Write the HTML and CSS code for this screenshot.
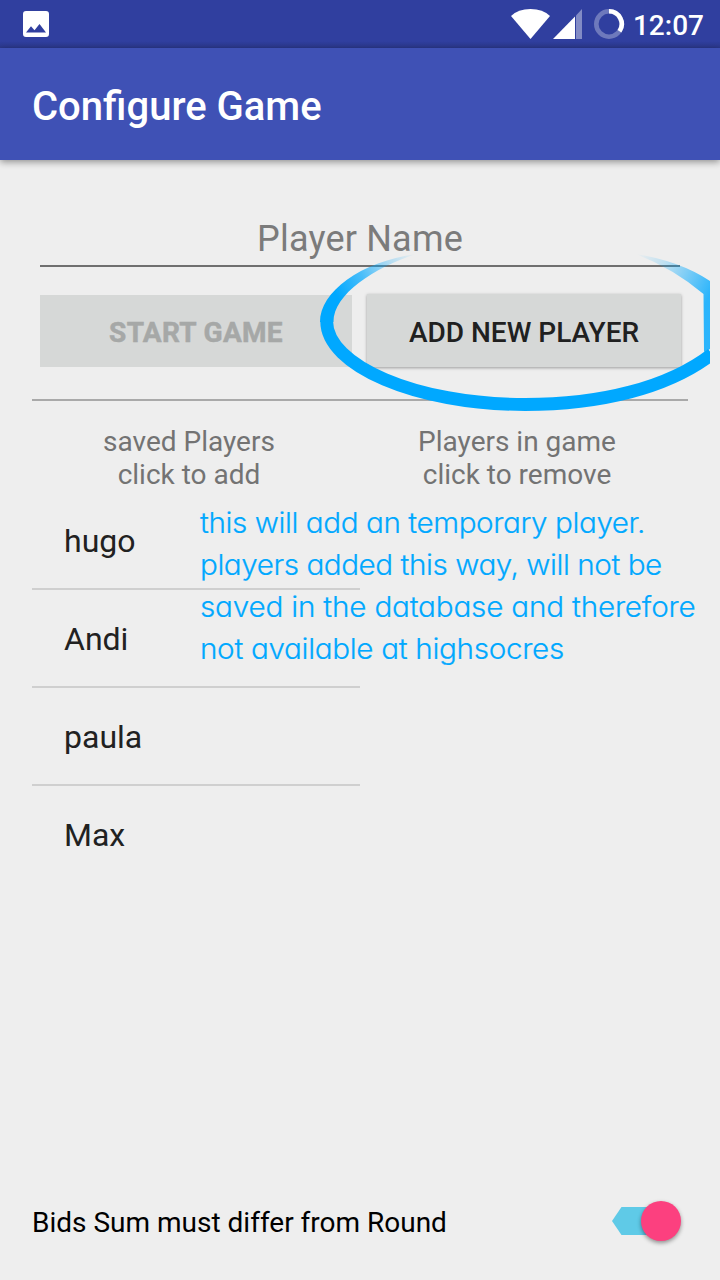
FILE: index.html
```html
<!DOCTYPE html>
<html lang="en">
<head>
<meta charset="utf-8">
<title>Configure Game</title>
<link rel="stylesheet" href="styles.css">
</head>
<body>
<div class="screen">
  <header class="status">
    <svg class="status-image" width="26" height="26" viewBox="0 0 26 26"><path fill="#fff" fill-rule="evenodd" d="M3 0H23Q26 0 26 3V23Q26 26 23 26H3Q0 26 0 23V3Q0 0 3 0ZM3 21.500H23L16.500 13L11.500 19.300L8 15.200Z"/></svg>
    <svg class="status-icons" width="116" height="34" viewBox="0 0 116 34">
      <path fill="#fff" d="M1 11Q8 4 20.500 4T40 11L20.500 34Z"/>
      <path fill="#fff" d="M43 34L65 11.500V34Z"/>
      <path fill="#fff" opacity=".4" d="M66 10.500L72 4V34H66Z"/>
      <circle cx="99" cy="19" r="12.700" fill="none" stroke="#fff" stroke-opacity=".3" stroke-width="4.600"/>
      <path d="M99 6.300A12.700 12.700 0 0 1 109.500 26.200" fill="none" stroke="#fff" stroke-width="4.600"/>
    </svg>
    <span class="clock">12:07</span>
  </header>
  <div class="appbar"><h1>Configure Game</h1></div>
  <main class="content">
    <div class="name-field">Player Name</div>
    <div class="buttons">
      <button class="btn btn-start" disabled>START GAME</button>
      <button class="btn btn-add">ADD NEW PLAYER</button>
    </div>
    <div class="columns">
      <section class="column">
        <p class="caption">saved Players<br>click to add</p>
        <ul class="players"><li>hugo</li><li>Andi</li><li>paula</li><li>Max</li></ul>
      </section>
      <section class="column">
        <p class="caption">Players in game<br>click to remove</p>
      </section>
    </div>
    <footer class="option">
      <span>Bids Sum must differ from Round</span>
      <span class="switch"><svg class="track" width="50" height="28" viewBox="0 0 50 28"><path fill="#5fcae7" d="M0 14L9.500 0H50V28H9.500Z"/></svg><span class="thumb"></span></span>
    </footer>
  </main>
  <svg class="highlight" width="400" height="180" viewBox="310 240 400 180">
    <defs>
      <linearGradient id="fade-left" gradientUnits="userSpaceOnUse" x1="416" y1="254" x2="338" y2="298">
        <stop offset="0" stop-color="#00a8ff" stop-opacity="0"/>
        <stop offset=".3" stop-color="#00a8ff" stop-opacity=".25"/>
        <stop offset=".65" stop-color="#00a8ff" stop-opacity=".7"/>
        <stop offset="1" stop-color="#00a8ff"/>
      </linearGradient>
      <linearGradient id="fade-right" gradientUnits="userSpaceOnUse" x1="636" y1="254" x2="712" y2="290">
        <stop offset="0" stop-color="#00a8ff" stop-opacity="0"/>
        <stop offset=".35" stop-color="#00a8ff" stop-opacity=".2"/>
        <stop offset="1" stop-color="#00a8ff" stop-opacity=".82"/>
      </linearGradient>
    </defs>
    <path d="M320 322C320 292 360 262 416 254C374 268 333.500 294 333.500 322Z" fill="url(#fade-left)"/>
    <path d="M326.700 321.500C326.700 365 415 404.500 525 404.500C600 404.500 668 388 712 354" fill="none" stroke="#00a8ff" stroke-width="12.800"/>
    <path d="M636 254Q680 261 710 281V349L704 352L703.500 294Q674 269 636 254Z" fill="url(#fade-right)"/>
  </svg>
  <div class="note">
    <div class="line-1">this will add an temporary player.</div>
    <div class="line-2">players added this way, will not be</div>
    <div class="line-3">saved in the database and therefore</div>
    <div class="line-4">not available at highsocres</div>
  </div>
</div>
</body>
</html>
```

FILE: styles.css
```css
* { box-sizing: border-box; }
body { margin: 0; background: #eee; font-family: Roboto, "Liberation Sans", sans-serif; }
.screen { position: relative; width: 720px; height: 1280px; overflow: hidden; display: flex; flex-direction: column; }
.status { height: 48px; flex: none; display: flex; align-items: flex-start; padding: 11px 16px 0 23px; color: #fff; background: linear-gradient(#303f9f 0, #303f9f 41px, #2b388c 48px); }
.status-icons { margin: -6px 7px 0 auto; }
.clock { font-size: 28px; line-height: 30px; font-weight: 500; white-space: nowrap; }
.appbar { height: 112px; flex: none; padding: 0 32px; display: flex; align-items: center; background: #3f51b5; color: #fff; box-shadow: 0 2px 7px rgba(0, 0, 0, .4); }
h1 { margin: 6px 0 0; font-size: 40px; line-height: 48px; font-weight: 500; }
.content { flex: 1; display: flex; flex-direction: column; padding: 52px 32px 0; }
.name-field { margin: 0 8px; height: 55px; border-bottom: 2px solid #6f6f6f; padding-top: 6px; text-align: center; font-size: 36px; letter-spacing: .2px; line-height: 43px; color: #7b7b7b; }
.buttons { display: flex; gap: 16px; height: 134px; padding: 28px 8px 0; border-bottom: 2px solid #a9a9a9; }
.btn { width: 312px; height: 72px; padding: 3px 0 0; border: 0; background: #d6d8d7; font: 500 28px Roboto, sans-serif; color: #202020; white-space: nowrap; }
.btn-start { font-weight: 700; letter-spacing: .3px; color: #a6a8a7; -webkit-text-stroke: .5px #a6a8a7; }
.btn-add { width: 314px; height: 73px; margin: -1px -1px 0; box-shadow: 0 1px 3px rgba(0, 0, 0, .35); }
.columns { display: flex; }
.column { width: 328px; }
.caption { margin: 24px 0 0; padding-right: 14px; text-align: center; font-size: 28px; line-height: 33px; color: #737373; }
.players { list-style: none; margin: 1px 0 0; padding: 0; }
.players li { height: 98px; padding: 3px 32px 0; border-bottom: 2px solid #cfcfcf; font-size: 32px; line-height: 92px; color: #212121; }
.players li:last-child { border-bottom: 0; }
.option { margin-top: auto; height: 116px; padding-right: 7px; display: flex; align-items: center; justify-content: space-between; font-size: 28px; color: #000; }
.switch { display: flex; align-items: center; width: 69px; padding-bottom: 2px; }
.track { flex: none; }
.thumb { flex: none; width: 40px; height: 40px; margin-left: -21px; border-radius: 50%; background: #fc407f; box-shadow: 0 2px 4px rgba(0, 0, 0, .4); }
.highlight { position: absolute; left: 310px; top: 240px; }
.note { position: absolute; left: 199.500px; top: 502px; font-family: Inter, sans-serif; font-size: 28px; font-weight: 300; font-feature-settings: "cv11"; line-height: 42px; color: #00a8ff; white-space: nowrap; -webkit-text-stroke: .2px #00a8ff; transform: scaleX(1.06); transform-origin: 0 0; }
.line-1 { letter-spacing: -.42px; }
.line-2 { letter-spacing: -.44px; }
.line-3 { letter-spacing: -.2px; }
.line-4 { letter-spacing: -.32px; }
```
